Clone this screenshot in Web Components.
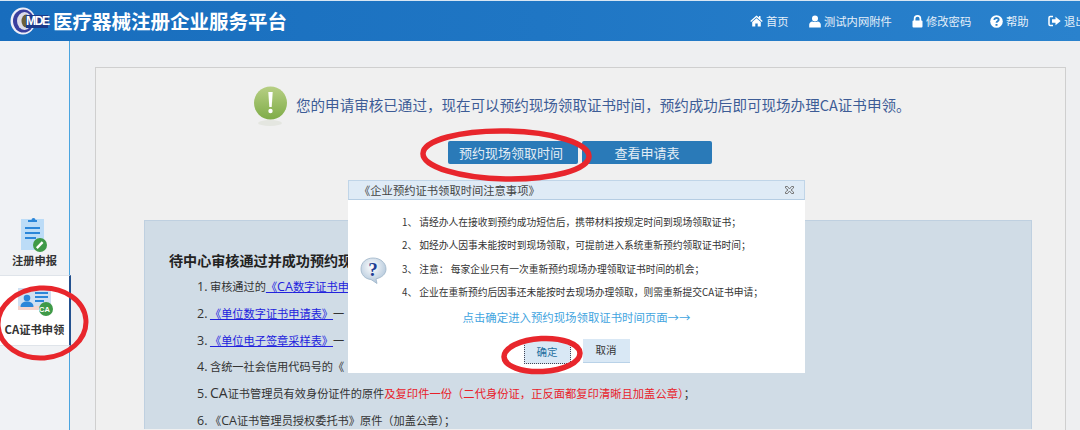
<!DOCTYPE html>
<html lang="zh">
<head>
<meta charset="utf-8">
<title>医疗器械注册企业服务平台</title>
<style>
  html, body { margin: 0; height: 100%; }
  body {
    width: 1080px;
    height: 430px;
    overflow: hidden;
    position: relative;
    background: #eeeff1;
    font-family: "Noto Sans CJK SC", "Noto Sans", sans-serif;
  }
  info-line em { font: normal 12.500px "Open Sans", sans-serif; }
  info-line em.wide { font-size: 14px; }
</style>
</head>
<body>
<app-header title-text="医疗器械注册企业服务平台">
  <nav-link icon="home" width="59">首页</nav-link>
  <nav-link icon="user" width="103">测试内网附件</nav-link>
  <nav-link icon="lock" width="78">修改密码</nav-link>
  <nav-link icon="help" width="58">帮助</nav-link>
  <nav-link icon="exit" width="32">退出</nav-link>
</app-header>

<app-shell>
  <side-nav slot="side">
    <side-item icon="form">注册申报</side-item>
    <side-item icon="card" active>CA证书申领</side-item>
  </side-nav>
  <status-panel slot="main">
    <span slot="message">您的申请审核已通过，现在可以预约现场领取证书时间，预约成功后即可现场办理CA证书申领。</span>
    <blue-button slot="actions">预约现场领取时间</blue-button>
    <blue-button slot="actions">查看申请表</blue-button>
    <info-box>
      <span slot="heading">待中心审核通过并成功预约现场</span>
      <info-line><em>1.</em> 审核通过的<a>《<em>CA</em>数字证书申</a></info-line>
      <info-line><em>2.</em> <a>《单位数字证书申请表》</a>一</info-line>
      <info-line><em>3.</em> <a>《单位电子签章采样表》</a>一</info-line>
      <info-line><em>4.</em> 含统一社会信用代码号的《</info-line>
      <info-line><em>5.</em> <em class="wide">CA</em>证书管理员有效身份证件的原件<b>及复印件一份（二代身份证，正反面都复印清晰且加盖公章）</b>；</info-line>
      <info-line><em>6.</em> 《<em>CA</em>证书管理员授权委托书》原件（加盖公章）；</info-line>
    </info-box>
  </status-panel>
</app-shell>

<notice-dialog title-text="《企业预约证书领取时间注意事项》">
  <notice-line>1、 请经办人在接收到预约成功短信后，携带材料按规定时间到现场领取证书；</notice-line>
  <notice-line>2、 如经办人因事未能按时到现场领取，可提前进入系统重新预约领取证书时间；</notice-line>
  <notice-line>3、 注意： 每家企业只有一次重新预约现场办理领取证书时间的机会；</notice-line>
  <notice-line>4、 企业在重新预约后因事还未能按时去现场办理领取，则需重新提交CA证书申请；</notice-line>
</notice-dialog>

<red-marks></red-marks>

<script>
const ICONS = {
  home: '<svg width="13" height="12" viewBox="0 0 13 12"><path fill="#fff" d="M6.5 0.5 0.3 6l.8 1 5.4-4.7L11.9 7l.8-1-2.2-2V1H9v1.6z"/><path fill="#fff" d="M2.2 7 6.5 3.3 10.8 7v4.6H7.7V8.4H5.3v3.2H2.2z"/></svg>',
  user: '<svg width="12" height="13" viewBox="0 0 12 13"><circle cx="6" cy="3.4" r="3" fill="#fff"/><path fill="#fff" d="M0.2 12.6V9.6C.2 7.8 1.8 6.800 3.400 6.500 4.200 7.200 7.800 7.200 8.600 6.500 10.200 6.800 11.800 7.800 11.800 9.600v3z"/></svg>',
  lock: '<svg width="11" height="13" viewBox="0 0 11 13"><path fill="none" stroke="#fff" stroke-width="1.700" d="M2.600 6V3.800a2.900 2.900 0 0 1 5.800 0V6"/><rect x="0.500" y="5.500" width="10" height="7" rx="1" fill="#fff"/></svg>',
  help: '<svg width="13" height="13" viewBox="0 0 13 13"><circle cx="6.500" cy="6.500" r="6.300" fill="#fff"/><path fill="none" stroke="#2a80ca" stroke-width="1.800" d="M4.300 5c0-1.400 1-2 2.200-2s2.200.7 2.200 1.800c0 1.500-2.200 1.500-2.200 3"/><rect x="5.500" y="9" width="2" height="1.800" fill="#2a80ca"/></svg>',
  exit: '<svg width="13" height="12" viewBox="0 0 13 12"><path fill="none" stroke="#fff" stroke-width="1.500" d="M5 1.500H2.200C1.400 1.500 1 2 1 2.700v6.600c0 .7.400 1.200 1.200 1.200H5"/><path fill="#fff" d="M7.500 1.800 12.700 6 7.500 10.200V7.800H4V4.200h3.500z"/></svg>',
  form: `<svg width="34" height="38" viewBox="0 0 34 38">
    <rect x="3" y="4" width="23" height="31" fill="#bcdcf7"/>
    <path fill="#2b86d9" d="M10 7V5h3.500a2 2 0 0 1 4 0H19v2z"/>
    <path stroke="#2b86d9" stroke-width="2" d="M7 13h15M7 18h15M7 23h11"/>
    <circle cx="22" cy="30" r="7" fill="#3f9a48"/>
    <path stroke="#fff" stroke-width="2.400" d="M18.800 33.200l5.800-6"/></svg>`,
  card: `<svg width="38" height="30" viewBox="0 0 38 30">
    <rect x="2" y="1" width="33" height="22" fill="#cfe0f2"/>
    <rect x="2" y="19" width="33" height="4" fill="#f3d5cf"/>
    <circle cx="11" cy="11" r="3.300" fill="#2b86d9"/>
    <path fill="#2b86d9" d="M4.500 20c0-4 3-5.500 6.500-5.500s6.500 1.500 6.500 5.500z"/>
    <path stroke="#2b86d9" stroke-width="2" d="M19 6h13M19 10h13M19 14h9"/>
    <circle cx="30" cy="22" r="7" fill="#3f9a48"/>
  </svg>`
};

class AppHeader extends HTMLElement {
  connectedCallback() {
    this.attachShadow({ mode: 'open' });
    this.shadowRoot.innerHTML = `
      <style>
        :host {
          display: flex;
          align-items: center;
          height: 40px;
          border-top: 1px solid #d8e6f3;
          background: linear-gradient(90deg, #186dbd, #1f76c4 50%, #2a82cd);
          color: #fff;
        }
        .logo {
          width: 38px;
          height: 30px;
          margin-left: 10px;
          position: relative;
          flex: none;
        }
        .logo svg { display: block; }
        .logo span {
          position: absolute;
          left: 16px;
          top: 7px;
          font: bold 12px/16px "Liberation Sans", sans-serif;
          letter-spacing: -1.300px;
          color: #fff;
        }
        h1 {
          margin: 0 0 0 5px;
          font-size: 19.500px;
          font-weight: 700;
          line-height: 30px;
          white-space: nowrap;
        }
        nav {
          margin-left: auto;
          display: flex;
          width: 330px;
          flex: none;
        }
      </style>
      <div class="logo">
        <svg width="38" height="30" viewBox="0 0 38 30">
          <ellipse cx="13" cy="15" rx="12.500" ry="13.500" fill="#eeeef8"/>
          <ellipse cx="13.500" cy="15" rx="10.500" ry="11.500" fill="#3a3f9e"/>
          <ellipse cx="14.500" cy="15" rx="7.500" ry="9" fill="#dcdcea"/>
          <ellipse cx="16" cy="15" rx="4.500" ry="6.500" fill="#6d5f3a"/>
          <rect x="16" y="9" width="22" height="13" fill="#1c3a8a"/>
        </svg>
        <span>MDE</span>
      </div>
      <h1>${this.getAttribute('title-text')}</h1>
      <nav><slot></slot></nav>
    `;
  }
}
customElements.define('app-header', AppHeader);

class NavLink extends HTMLElement {
  connectedCallback() {
    this.attachShadow({ mode: 'open' });
    this.shadowRoot.innerHTML = `
      <style>
        :host {
          display: flex;
          align-items: center;
          gap: 3px;
          width: ${this.getAttribute('width')}px;
          flex: none;
          font-size: 11.300px;
          line-height: 16px;
          white-space: nowrap;
          color: #e6f0f9;
        }
        svg { display: block; flex: none; }
      </style>
      ${ICONS[this.getAttribute('icon')]}
      <slot></slot>
    `;
  }
}
customElements.define('nav-link', NavLink);

class AppShell extends HTMLElement {
  connectedCallback() {
    this.attachShadow({ mode: 'open' });
    this.shadowRoot.innerHTML = `
      <style>
        :host {
          display: grid;
          grid-template-columns: 70px 1fr;
          height: 389px;
        }
      </style>
      <slot name="side"></slot>
      <slot name="main"></slot>
    `;
  }
}
customElements.define('app-shell', AppShell);

class SideNav extends HTMLElement {
  connectedCallback() {
    this.attachShadow({ mode: 'open' });
    this.shadowRoot.innerHTML = `
      <style>
        :host {
          display: block;
          box-sizing: border-box;
          height: 389px;
          padding-top: 174px;
          background: #f0f2f5;
          border-right: 1px solid #4aa5e0;
        }
      </style>
      <slot></slot>
    `;
  }
}
customElements.define('side-nav', SideNav);

class SideItem extends HTMLElement {
  connectedCallback() {
    const active = this.hasAttribute('active');
    this.attachShadow({ mode: 'open' });
    this.shadowRoot.innerHTML = `
      <style>
        :host {
          display: flex;
          flex-direction: column;
          align-items: center;
          box-sizing: border-box;
          width: ${active ? '71px' : '69px'};
          height: ${active ? '71px' : '60px'};
          padding-top: ${active ? '11px' : '0'};
          font-size: 11.300px;
          font-weight: 700;
          line-height: ${active ? '16px' : '14px'};
          white-space: nowrap;
          color: #333;
          ${active ? `
          background: #fff;
          border-top: 1px solid #dfe4ea;
          border-bottom: 1px solid #dfe4ea;
          border-right: 2px solid #23518f;
          ` : ''}
        }
        .pic { position: relative; height: ${active ? '30px' : '38px'}; margin-bottom: ${active ? '4px' : '0'}; }
        .pic svg { display: block; }
        .ca {
          position: absolute;
          right: 2px;
          bottom: 0;
          width: 14px;
          text-align: center;
          font: bold 7.500px/14px "Liberation Sans", sans-serif;
          color: #fff;
        }
      </style>
      <div class="pic">${ICONS[this.getAttribute('icon')]}${active ? '<span class="ca">CA</span>' : ''}</div>
      <slot></slot>
    `;
  }
}
customElements.define('side-item', SideItem);

class StatusPanel extends HTMLElement {
  connectedCallback() {
    this.attachShadow({ mode: 'open' });
    this.shadowRoot.innerHTML = `
      <style>
        :host {
          display: block;
          margin: 26px 14px 0 25px;
          border: 1px solid #cfcfcf;
          border-bottom: none;
          background: #f0f0f0;
          height: 363px;
          box-sizing: border-box;
        }
        .msg {
          display: flex;
          align-items: center;
          gap: 7px;
          padding: 19px 0 0 157px;
          height: 36px;
          font-size: 14.550px;
          line-height: 36px;
          color: #3d5c96;
          white-space: nowrap;
        }
        .msg svg { display: block; flex: none; }
        .actions {
          display: flex;
          gap: 4px;
          margin: 18px 0 0 352px;
        }
        .body { padding: 56px 33px 0 48px; }
      </style>
      <div class="msg">
        <svg width="36" height="42" viewBox="0 0 36 42" style="margin-top:4px">
          <defs>
            <linearGradient id="g" x1="0" y1="0" x2="0" y2="1">
              <stop offset="0" stop-color="#b7cf84"/><stop offset="1" stop-color="#7fac48"/>
            </linearGradient>
          </defs>
          <ellipse cx="17" cy="37" rx="12" ry="3" fill="#e4e6e0"/>
          <circle cx="17.500" cy="17" r="16.500" fill="url(#g)"/>
          <path fill="#fff" d="M15.300 6h4.400l-1 15h-2.400z"/>
          <circle cx="17.500" cy="25" r="2.200" fill="#fff"/>
        </svg>
        <slot name="message"></slot>
      </div>
      <div class="actions"><slot name="actions"></slot></div>
      <div class="body"><slot></slot></div>
    `;
  }
}
customElements.define('status-panel', StatusPanel);

class BlueButton extends HTMLElement {
  connectedCallback() {
    this.attachShadow({ mode: 'open' });
    this.shadowRoot.innerHTML = `
      <style>
        :host {
          display: block;
          box-sizing: border-box;
          width: 130px;
          height: 23px;
          border-radius: 2px;
          background: #2a7ab8;
          color: #e3edf5;
          text-align: center;
          font-size: 13px;
          line-height: 23px;
        }
        :host(:first-of-type) { padding-right: 4px; }
      </style>
      <slot></slot>
    `;
  }
}
customElements.define('blue-button', BlueButton);

class InfoBox extends HTMLElement {
  connectedCallback() {
    this.attachShadow({ mode: 'open' });
    this.shadowRoot.innerHTML = `
      <style>
        :host {
          display: block;
          background: #d0dce6;
          border: 1px solid #bfd0e0;
          border-bottom: none;
          padding: 29px 0 0 24px;
          height: 209px;
          box-sizing: border-box;
          overflow: hidden;
        }
        .head {
          font-size: 14.100px;
          font-weight: 700;
          line-height: 20px;
          color: #222;
          white-space: nowrap;
        }
        .lines { padding: 3px 0 0 28px; }
      </style>
      <div class="head"><slot name="heading"></slot></div>
      <div class="lines"><slot></slot></div>
    `;
  }
}
customElements.define('info-box', InfoBox);

class InfoLine extends HTMLElement {
  connectedCallback() {
    this.attachShadow({ mode: 'open' });
    this.shadowRoot.innerHTML = `
      <style>
        :host {
          display: block;
          height: 26.800px;
          font-size: 11.200px;
          line-height: 26.800px;
          color: #333;
          white-space: nowrap;
        }
        ::slotted(a) { color: #2222dd; text-decoration: underline; }
        ::slotted(b) { color: #e8212a; font-weight: 400; font-size: 11.300px; }
      </style>
      <slot></slot>
    `;
  }
}
customElements.define('info-line', InfoLine);

class NoticeDialog extends HTMLElement {
  connectedCallback() {
    this.attachShadow({ mode: 'open' });
    this.shadowRoot.innerHTML = `
      <style>
        :host {
          position: absolute;
          left: 348px;
          top: 180px;
          width: 457px;
          height: 193px;
          background: #fff;
          display: block;
        }
        header {
          display: flex;
          align-items: center;
          justify-content: space-between;
          height: 20px;
          padding: 0 10px 0 10px;
          background: #dfebf6;
          border: 1px solid #c0d5e8;
          border-bottom-color: #b5cde3;
          box-sizing: border-box;
          font-size: 11.300px;
          color: #444;
        }
        header svg { display: block; }
        .content {
          display: flex;
          padding: 11px 0 0 12px;
          height: 94px;
        }
        .ask {
          flex: none;
          width: 42px;
          padding-top: 46px;
        }
        .ask svg { display: block; }
        .lines { flex: 1; }
        .go {
          text-align: center;
          margin: 0;
          padding: 4px 0 0 0;
          font-size: 11.400px;
          line-height: 16px;
          color: #3fa4e0;
        }
        .btns {
          display: flex;
          justify-content: center;
          gap: 12px;
          margin-top: 14px;
        }
        .btn {
          width: 47px;
          height: 24px;
          box-sizing: border-box;
          background: #d9e8f5;
          border-bottom: 1px solid #b9d2e8;
          text-align: center;
          font-size: 10.500px;
          line-height: 22px;
          color: #333;
        }
        .btn.ok {
          color: #1f6f9f;
          border: 1px dotted #445;
          margin-top: 1px;
        }
      </style>
      <header>
        <span>${this.getAttribute('title-text')}</span>
        <svg width="9" height="8" viewBox="0 0 9 8"><path fill="none" stroke="#777" d="M0.500 0.500h2l2 2.500 2-2.500h2v1.500L6 4l2.500 2v1.500h-2l-2-2.500-2 2.500h-2V6L3 4 .5 2z"/></svg>
      </header>
      <div class="content">
        <div class="ask">
          <svg width="27" height="27" viewBox="0 0 27 27">
            <defs>
              <radialGradient id="q" cx="0.450" cy="0.350" r="0.700">
                <stop offset="0" stop-color="#fff"/><stop offset="1" stop-color="#a9c0d6"/>
              </radialGradient>
            </defs>
            <path fill="url(#q)" stroke="#9db4c8" stroke-width="0.800" d="M13 1C6 1 1 5.500 1 12c0 5.500 4 10 10 10.500l6 4-1-4.600C22 20.500 26 17 26 12 26 5.500 20 1 13 1z"/>
            <text x="13" y="19" text-anchor="middle" font-family="Liberation Serif, serif" font-weight="700" font-size="19" fill="#1f3f94">?</text>
          </svg>
        </div>
        <div class="lines"><slot></slot></div>
      </div>
      <p class="go">点击确定进入预约现场领取证书时间页面→→</p>
      <div class="btns">
        <div class="btn ok">确定</div>
        <div class="btn">取消</div>
      </div>
    `;
  }
}
customElements.define('notice-dialog', NoticeDialog);

class NoticeLine extends HTMLElement {
  connectedCallback() {
    this.attachShadow({ mode: 'open' });
    this.shadowRoot.innerHTML = `
      <style>
        :host {
          display: block;
          height: 23.300px;
          font-size: 9.750px;
          line-height: 23.300px;
          color: #333;
          white-space: nowrap;
        }
      </style>
      <slot></slot>
    `;
  }
}
customElements.define('notice-line', NoticeLine);

// hand drawn red circles sit over the whole page
class RedMarks extends HTMLElement {
  connectedCallback() {
    this.attachShadow({ mode: 'open' });
    this.shadowRoot.innerHTML = `
      <style>
        :host { position: absolute; left: 0; top: 0; width: 1080px; height: 430px; pointer-events: none; }
        svg { display: block; }
        ellipse { fill: none; stroke: #e8262c; stroke-width: 5.500; }
      </style>
      <svg width="1080" height="430" viewBox="0 0 1080 430">
        <ellipse cx="506" cy="155" rx="83" ry="24" transform="rotate(1 506 155)"/>
        <ellipse cx="42" cy="323" rx="44" ry="35" transform="rotate(-4 42 323)" style="stroke-width:5"/>
        <ellipse cx="542" cy="355" rx="38" ry="16.500" transform="rotate(-3 542 355)"/>
      </svg>
    `;
  }
}
customElements.define('red-marks', RedMarks);
</script>
</body>
</html>
